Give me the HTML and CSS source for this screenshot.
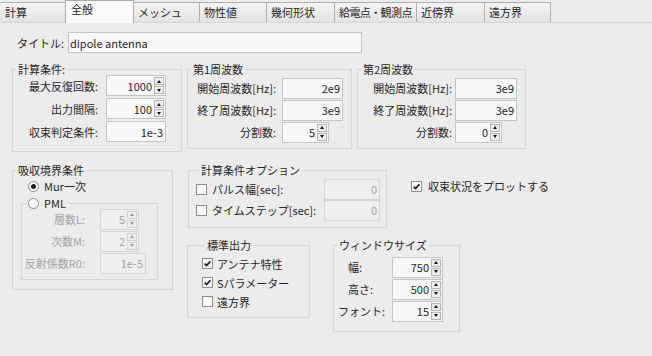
FILE: index.html
```html
<!DOCTYPE html>
<html lang="ja">
  <head>
    <meta charset="utf-8">
    <title>全般</title>
    <link rel="stylesheet" href="styles.css">
  </head>
  <body>

  <div class="tabs">
    <div class="tab t-calc">計算</div>
    <div class="tab t-gen active">全般</div>
    <div class="tab t-mesh">メッシュ</div>
    <div class="tab t-mat">物性値</div>
    <div class="tab t-geo">幾何形状</div>
    <div class="tab t-feed">給電点・観測点</div>
    <div class="tab t-near">近傍界</div>
    <div class="tab t-far">遠方界</div>
  </div>

  <div class="panel">
    <div class="title-row">
      <span class="title-label">タイトル:</span>
      <div class="field title-field">dipole antenna</div>
    </div>

    <div class="row-top">
      <fieldset class="group g-calc">
        <legend>計算条件:</legend>
        <div class="frow">
          <span class="lbl">最大反復回数:</span>
          <div class="field w60"><span class="val">1000</span><span class="spin"><i class="up"></i><i class="dn"></i></span></div>
        </div>
        <div class="frow">
          <span class="lbl">出力間隔:</span>
          <div class="field w60"><span class="val">100</span><span class="spin"><i class="up"></i><i class="dn"></i></span></div>
        </div>
        <div class="frow">
          <span class="lbl">収束判定条件:</span>
          <div class="field w60"><span class="val">1e-3</span></div>
        </div>
      </fieldset>

      <fieldset class="group g-freq1">
        <legend>第1周波数</legend>
        <div class="frow">
          <span class="lbl">開始周波数[Hz]:</span>
          <div class="field w61"><span class="val">2e9</span></div>
        </div>
        <div class="frow">
          <span class="lbl">終了周波数[Hz]:</span>
          <div class="field w61"><span class="val">3e9</span></div>
        </div>
        <div class="frow">
          <span class="lbl">分割数:</span>
          <div class="field w47"><span class="val">5</span><span class="spin"><i class="up"></i><i class="dn"></i></span></div>
        </div>
      </fieldset>

      <fieldset class="group g-freq2">
        <legend>第2周波数</legend>
        <div class="frow">
          <span class="lbl">開始周波数[Hz]:</span>
          <div class="field w62"><span class="val">3e9</span></div>
        </div>
        <div class="frow">
          <span class="lbl">終了周波数[Hz]:</span>
          <div class="field w62"><span class="val">3e9</span></div>
        </div>
        <div class="frow">
          <span class="lbl">分割数:</span>
          <div class="field w47"><span class="val">0</span><span class="spin"><i class="up"></i><i class="dn"></i></span></div>
        </div>
      </fieldset>
    </div>

    <div class="row-bottom">
      <fieldset class="group g-abs">
        <legend>吸収境界条件</legend>
        <div class="radio-row"><span class="rb on"></span>Mur一次</div>
        <fieldset class="group g-pml">
          <legend class="radio-legend"><span class="rb"></span>PML</legend>
          <div class="frow dis">
            <span class="lbl">層数L:</span>
            <div class="field dis w39"><span class="val">5</span><span class="spin"><i class="up"></i><i class="dn"></i></span></div>
          </div>
          <div class="frow dis">
            <span class="lbl">次数M:</span>
            <div class="field dis w39"><span class="val">2</span><span class="spin"><i class="up"></i><i class="dn"></i></span></div>
          </div>
          <div class="frow dis">
            <span class="lbl">反射係数R0:</span>
            <div class="field dis w46"><span class="val">1e-5</span></div>
          </div>
        </fieldset>
      </fieldset>

      <div class="mid">
        <div class="mid-top">
          <fieldset class="group g-opt">
            <legend>計算条件オプション</legend>
            <div class="frow">
              <span class="cb"></span>
              <span class="cb-text">パルス幅[sec]:</span>
              <div class="field dis w56"><span class="val">0</span></div>
            </div>
            <div class="frow">
              <span class="cb"></span>
              <span class="cb-text">タイムステップ[sec]:</span>
              <div class="field dis w56"><span class="val">0</span></div>
            </div>
          </fieldset>
          <div class="plot-check">
            <span class="cb"><svg viewBox="0 0 9 9"><path d="M1.6 4.6 L3.6 6.6 L7.4 2.2"/></svg></span>
            収束状況をプロットする
          </div>
        </div>

        <div class="mid-bottom">
          <fieldset class="group g-out">
            <legend>標準出力</legend>
            <div class="crow"><span class="cb"><svg viewBox="0 0 9 9"><path d="M1.6 4.6 L3.6 6.6 L7.4 2.2"/></svg></span>アンテナ特性</div>
            <div class="crow"><span class="cb"><svg viewBox="0 0 9 9"><path d="M1.6 4.6 L3.6 6.6 L7.4 2.2"/></svg></span>Sパラメーター</div>
            <div class="crow"><span class="cb"></span>遠方界</div>
          </fieldset>

          <fieldset class="group g-win">
            <legend>ウィンドウサイズ</legend>
            <div class="frow">
              <span class="lbl">幅:</span>
              <div class="field w51"><span class="val">750</span><span class="spin"><i class="up"></i><i class="dn"></i></span></div>
            </div>
            <div class="frow">
              <span class="lbl">高さ:</span>
              <div class="field w51"><span class="val">500</span><span class="spin"><i class="up"></i><i class="dn"></i></span></div>
            </div>
            <div class="frow">
              <span class="lbl lbl-wide">フォント:</span>
              <div class="field w51"><span class="val">15</span><span class="spin"><i class="up"></i><i class="dn"></i></span></div>
            </div>
          </fieldset>
        </div>
      </div>
    </div>
  </div>

  </body>
</html>
```

FILE: styles.css
```css
html {
  height: 100%;
}
body {
  margin: 0;
  background: #ececec;
  color: #262626;
  font-family: "Noto Sans CJK JP", "Noto Sans", sans-serif;
  font-size: 11px;
  line-height: 14px;
}

/* tab strip */
.tabs {
  display: flex;
  align-items: flex-end;
  height: 22px;
  border-bottom: 1px solid #d6d6d6;
}
.tab {
  box-sizing: border-box;
  height: 20px;
  margin-right: -1px;
  padding-left: 4px;
  border: 1px solid #adadad;
  border-bottom: none;
  background: linear-gradient(#f4f4f4, #e3e3e3);
  line-height: 18px;
  white-space: nowrap;
  overflow: hidden;
}
.tab.active {
  position: relative;
  z-index: 1;
  height: 23px;
  margin-bottom: -1px;
  padding-left: 5px;
  background: #fbfbfb;
  line-height: 17px;
}
.t-calc { width: 66px; border-left-color: transparent; }
.t-gen { width: 69px; }
.t-mesh { width: 67px; }
.t-mat { width: 68px; }
.t-geo { width: 69px; }
.t-feed { width: 83px; letter-spacing: -0.6px; }
.t-near { width: 69px; }
.t-far { width: 67px; }

.panel {
  padding: 9px 0 0 12px;
}

/* text boxes */
.field {
  box-sizing: border-box;
  display: flex;
  align-items: center;
  height: 21px;
  border: 1px solid #c4c4c4;
  background: #f8f8f8;
}
.field.dis {
  border-color: #d6d6d6;
  background: #efefef;
  color: #a4a4a4;
}
.val {
  flex: 1;
  text-align: right;
  padding-right: 2px;
}
.spin {
  display: flex;
  flex-direction: column;
  gap: 1px;
  align-self: stretch;
  width: 10px;
  padding: 1px 1px 1px 0;
}
.spin i {
  flex: 1;
  display: flex;
  align-items: center;
  justify-content: center;
  border: 1px solid #b4b4b4;
  background: #eeeeee;
}
.spin .up::after {
  content: "";
  border-left: 2.5px solid transparent;
  border-right: 2.5px solid transparent;
  border-bottom: 3px solid #111;
}
.spin .dn::after {
  content: "";
  border-left: 2.5px solid transparent;
  border-right: 2.5px solid transparent;
  border-top: 3px solid #111;
}
.field.dis .spin i {
  border-color: #d2d2d2;
  background: #ececec;
}
.field.dis .spin .up::after { border-bottom-color: #9a9a9a; }
.field.dis .spin .dn::after { border-top-color: #9a9a9a; }

.w39 { width: 39px; }
.w46 { width: 46px; }
.w47 { width: 47px; }
.w51 { width: 51px; }
.w56 { width: 56px; }
.w60 { width: 60px; }
.w61 { width: 61px; }
.w62 { width: 62px; }

.title-row {
  display: flex;
  align-items: center;
}
.title-label {
  width: 52px;
  margin-right: 4px;
  text-align: right;
}
.title-field {
  width: 294px;
  padding-left: 1px;
}

/* group boxes */
.group {
  box-sizing: border-box;
  min-width: 0;
  margin: 0;
  padding: 0;
  border: 1px solid #d6d6d6;
}
.group legend {
  margin-left: 3px;
  padding: 0 2px;
  line-height: 12px;
}
.frow {
  display: flex;
  align-items: center;
  height: 20px;
  margin-top: 2px;
}
.frow:first-of-type {
  margin-top: 0;
}
.frow.dis {
  color: #a4a4a4;
}
.lbl {
  text-align: right;
  white-space: nowrap;
}

.row-top {
  display: flex;
  align-items: flex-start;
  gap: 5px;
  margin-top: 10px;
}
.g-calc {
  width: 170px;
  padding-bottom: 9px;
}
.g-calc .frow { height: 21px; }
.g-calc .lbl { width: 85px; margin-right: 8px; }

.g-freq1 {
  width: 165px;
  padding: 3px 0 6px;
}
.g-freq1 .lbl { width: 88px; margin-right: 6px; }

.g-freq2 {
  width: 169px;
  padding: 3px 0 6px;
}
.g-freq2 .lbl { width: 94px; margin-right: 3px; }

.row-bottom {
  display: flex;
  align-items: flex-start;
  margin-top: 12px;
}

/* radio & check */
.rb {
  box-sizing: border-box;
  display: inline-flex;
  align-items: center;
  justify-content: center;
  width: 11px;
  height: 11px;
  margin-right: 5px;
  border: 1px solid #8a8a8a;
  border-radius: 50%;
  background: #fbfbfb;
}
.rb.on::after {
  content: "";
  width: 5px;
  height: 5px;
  border-radius: 50%;
  background: #1b1b1b;
}
.cb {
  box-sizing: border-box;
  display: inline-flex;
  flex: none;
  width: 11px;
  height: 11px;
  margin-right: 5px;
  border: 1px solid #8e8e8e;
  background: #fbfbfb;
}
.cb svg {
  width: 9px;
  height: 9px;
}
.cb path {
  fill: none;
  stroke: #1b1b1b;
  stroke-width: 1.7;
}

.g-abs {
  width: 161px;
  padding-bottom: 9px;
}
.radio-row {
  display: flex;
  align-items: center;
  height: 16px;
  margin-top: 2px;
  padding-left: 15px;
}
.g-pml {
  width: 137px;
  margin: 3px 0 0 8px;
  padding-bottom: 6px;
}
.group .radio-legend {
  display: flex;
  align-items: center;
  margin-left: 4px;
}
.g-pml .lbl { width: 63px; margin-right: 15px; }

.mid {
  display: flex;
  flex-direction: column;
  margin-left: 14px;
}
.mid-top {
  display: flex;
  align-items: flex-start;
}
.g-opt {
  width: 199px;
  margin-left: 1px;
  padding: 3px 6px 7px 7px;
}
.g-opt .frow { margin-top: 1px; }
.g-opt .frow:first-of-type { margin-top: 0; }
.cb-text {
  flex: 1;
  white-space: nowrap;
}
.plot-check {
  display: flex;
  align-items: center;
  height: 14px;
  margin: 15px 0 0 24px;
  white-space: nowrap;
}
.plot-check .cb { margin-right: 6px; }

.mid-bottom {
  display: flex;
  align-items: flex-start;
  margin-top: 11px;
}
.g-out {
  width: 123px;
  padding: 3px 0 6px 14px;
}
.crow {
  display: flex;
  align-items: center;
  height: 19px;
}
.crow .cb { margin-right: 4px; }

.g-win {
  width: 127px;
  margin-left: 23px;
  padding: 6px 0 10px;
}
.g-win .lbl {
  box-sizing: border-box;
  width: 54px;
  margin-right: 4px;
  padding-left: 14px;
  text-align: left;
}
.g-win .lbl-wide {
  padding-left: 4px;
}
```
